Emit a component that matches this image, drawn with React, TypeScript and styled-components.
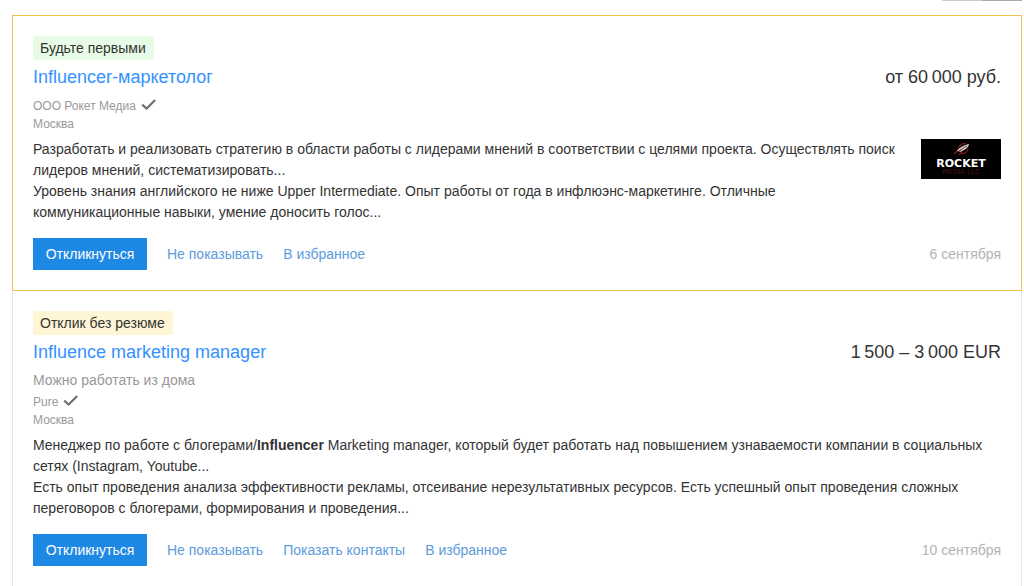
import React from 'react';
import styled, { createGlobalStyle } from 'styled-components';

const GlobalStyle = createGlobalStyle`
  * { box-sizing: border-box; }
  body {
    margin: 0;
    background: #fff;
    color: #333;
    font: 14px/21px "Liberation Sans", Arial, sans-serif;
    overflow-x: hidden;
  }
`;

const Page = styled.main`
  padding: 0 2px 0 12px;
`;

const TopEdge = styled.div`
  display: flex;
  justify-content: flex-end;
  height: 15px;
`;

const EdgeSegment = styled.span<{ $active?: boolean }>`
  width: 40px;
  height: 1px;
  background: ${(p) => (p.$active ? '#aaa' : '#ccc')};
`;

const Card = styled.article<{ $highlighted?: boolean }>`
  padding: 20px;
  border: 1px solid ${(p) => (p.$highlighted ? '#eec14e' : '#e5e5e5')};
  border-top-width: ${(p) => (p.$highlighted ? '1px' : '0')};
`;

const Tag = styled.span<{ $tone: 'green' | 'yellow' }>`
  display: block;
  width: fit-content;
  padding: 0 8px 0 7px;
  border-radius: 3px;
  line-height: 24px;
  background: ${(p) => (p.$tone === 'green' ? '#e7fbe6' : '#fdf5d3')};
`;

const Heading = styled.header`
  display: flex;
  justify-content: space-between;
  align-items: baseline;
  gap: 20px;
  margin: 5px 0 6px;
  font-size: 18px;
  line-height: 24px;
`;

const Title = styled.h2`
  margin: 0;
  font: inherit;
`;

const TitleLink = styled.a`
  color: #3392ff;
  text-decoration: none;
`;

const Salary = styled.span`
  white-space: nowrap;
`;

const Remote = styled.div`
  color: #999;
`;

const Company = styled.div`
  padding-top: 2px;
`;

const Meta = styled.div`
  display: flex;
  align-items: center;
  gap: 5px;
  color: #999;
  font-size: 12px;
  line-height: 18px;
`;

const MetaLink = styled.a`
  color: inherit;
  text-decoration: none;
`;

const CheckIcon = styled.svg`
  flex: none;
  margin-bottom: 2px;
`;

const Body = styled.div`
  display: flex;
  align-items: flex-start;
  gap: 20px;
  margin: 6px 0 15px;
`;

const Snippets = styled.div`
  flex: 1;
  min-width: 0;
`;

const Snippet = styled.p`
  margin: 0;
`;

const Logo = styled.svg`
  flex: none;
  display: block;
  width: 80px;
  height: 40px;
`;

const Actions = styled.footer`
  display: flex;
  align-items: center;
  gap: 20px;
`;

const RespondButton = styled.button`
  height: 32px;
  min-width: 114px;
  padding: 0 12px;
  border: 0;
  background: #1e88e5;
  color: #fff;
  font: inherit;
  cursor: pointer;
`;

const TextButton = styled.button`
  padding: 0;
  border: 0;
  background: none;
  color: #5c9bdc;
  font: inherit;
  cursor: pointer;
`;

const PostedDate = styled.span`
  margin-left: auto;
  color: #b3b3b3;
`;

const Check = () => (
  <CheckIcon width="16" height="12" viewBox="0 0 16 12" aria-hidden="true">
    <path d="M1.2 5.6 5.6 9.6 14.2 1" fill="none" stroke="#6f6f6f" strokeWidth="2.2" />
  </CheckIcon>
);

const RocketLogo = () => (
  <Logo viewBox="0 0 80 40" role="img" aria-label="Rocket Media LLC">
    <rect width="80" height="40" fill="#000" />
    <path d="M37 11C37 6 42 4 45 5M39 14C43 16 47 13 47 9M37 11 33 15M41 13 38 16" fill="none" stroke="#7d171c" strokeWidth="1.2" />
    <path d="M36 12C39 8 43 6 48 5 48 8 44 11 39 13Z" fill="#d8cccc" />
    <path d="M38 12 46 7M35 14 40 11" stroke="#5d1519" strokeWidth="0.8" />
    <text x="40" y="28" textAnchor="middle" fill="#fff" fontFamily="DejaVu Sans, sans-serif" fontWeight="bold" fontSize="11">ROCKET</text>
    <text x="40" y="35" textAnchor="middle" fill="#4a1013" fontFamily="DejaVu Sans, sans-serif" fontSize="7">MEDIA LLC</text>
  </Logo>
);

type Vacancy = {
  highlighted?: boolean;
  tag: string;
  tone: 'green' | 'yellow';
  title: string;
  salary: string;
  remote?: string;
  employer: string;
  city: string;
  snippets: React.ReactNode[];
  logo?: React.ReactNode;
  actions: string[];
  date: string;
};

const vacancies: Vacancy[] = [
  {
    highlighted: true,
    tag: 'Будьте первыми',
    tone: 'green',
    title: 'Influencer-маркетолог',
    salary: 'от 60\u2009000 руб.',
    employer: 'ООО Рокет Медиа',
    city: 'Москва',
    snippets: [
      'Разработать и реализовать стратегию в области работы с лидерами мнений в соответствии с целями проекта. Осуществлять поиск лидеров мнений, систематизировать...',
      'Уровень знания английского не ниже Upper Intermediate. Опыт работы от года в инфлюэнс-маркетинге. Отличные коммуникационные навыки, умение доносить голос...',
    ],
    logo: <RocketLogo />,
    actions: ['Не показывать', 'В избранное'],
    date: '6 сентября',
  },
  {
    tag: 'Отклик без резюме',
    tone: 'yellow',
    title: 'Influence marketing manager',
    salary: '1\u2009500 – 3\u2009000 EUR',
    remote: 'Можно работать из дома',
    employer: 'Pure',
    city: 'Москва',
    snippets: [
      <>
        Менеджер по работе с блогерами/<b>Influencer</b> Marketing manager, который будет работать над повышением
        узнаваемости компании в социальных сетях (Instagram, Youtube...
      </>,
      'Есть опыт проведения анализа эффективности рекламы, отсеивание нерезультативных ресурсов. Есть успешный опыт проведения сложных переговоров с блогерами, формирования и проведения...',
    ],
    actions: ['Не показывать', 'Показать контакты', 'В избранное'],
    date: '10 сентября',
  },
];

const VacancyCard = ({ v }: { v: Vacancy }) => (
  <Card $highlighted={v.highlighted}>
    <Tag $tone={v.tone}>{v.tag}</Tag>
    <Heading>
      <Title>
        <TitleLink href="#">{v.title}</TitleLink>
      </Title>
      <Salary>{v.salary}</Salary>
    </Heading>
    {v.remote && <Remote>{v.remote}</Remote>}
    <Company>
      <Meta>
        <MetaLink href="#">{v.employer}</MetaLink>
        <Check />
      </Meta>
      <Meta>{v.city}</Meta>
    </Company>
    <Body>
      <Snippets>
        {v.snippets.map((s, i) => (
          <Snippet key={i}>{s}</Snippet>
        ))}
      </Snippets>
      {v.logo}
    </Body>
    <Actions>
      <RespondButton type="button">Откликнуться</RespondButton>
      {v.actions.map((a) => (
        <TextButton type="button" key={a}>
          {a}
        </TextButton>
      ))}
      <PostedDate>{v.date}</PostedDate>
    </Actions>
  </Card>
);

export default function App() {
  return (
    <>
      <GlobalStyle />
      <Page>
        <TopEdge>
          <EdgeSegment />
          <EdgeSegment $active />
        </TopEdge>
        {vacancies.map((v) => (
          <VacancyCard key={v.title} v={v} />
        ))}
      </Page>
    </>
  );
}
